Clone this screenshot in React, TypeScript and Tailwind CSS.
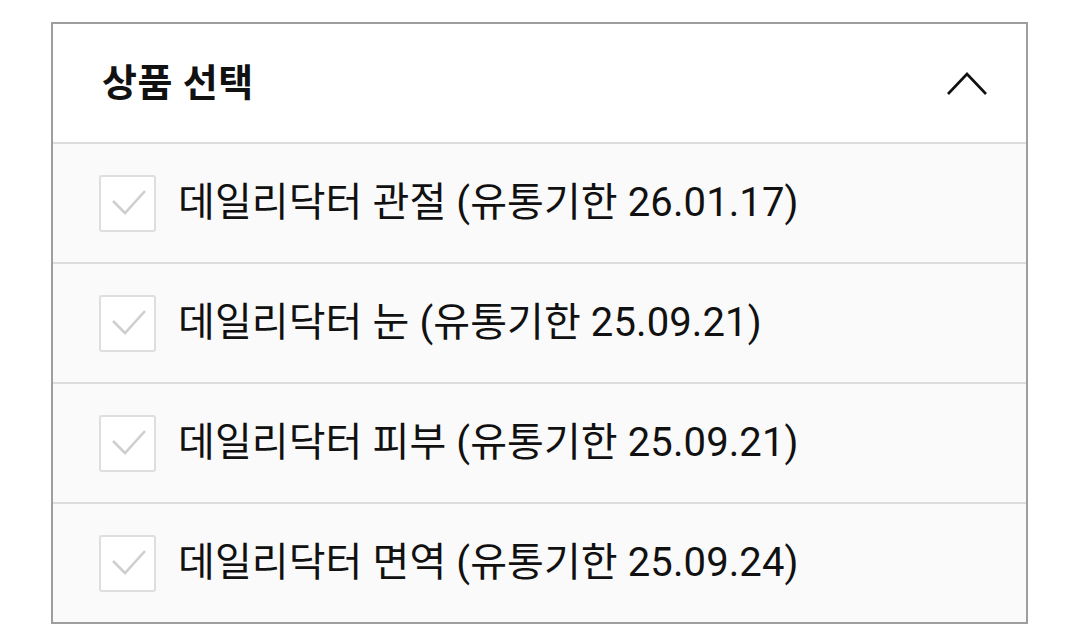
import React from "react";

const items = [
  "데일리닥터 관절 (유통기한 26.01.17)",
  "데일리닥터 눈 (유통기한 25.09.21)",
  "데일리닥터 피부 (유통기한 25.09.21)",
  "데일리닥터 면역 (유통기한 25.09.24)",
];

const font = { fontFamily: 'Roboto, "Noto Sans CJK KR", sans-serif' };

export default function App() {
  return (
    <div className="w-[1080px] h-[633px] bg-white pt-[22px] pl-[51px]" style={font}>
      <div className="w-[977px] border-2 border-[#9e9e9e] bg-white">
        <div className="h-[120px] flex items-center justify-between pl-[49px] pr-[38px] border-b-2 border-[#dcdcdc]">
          <span className="text-[38px] font-bold text-[#111] tracking-[0.5px]">상품 선택</span>
          <svg width="42" height="26" viewBox="0 0 42 26" fill="none">
            <path d="M2 24 L21 4 L40 24" stroke="#111" strokeWidth="2.6" />
          </svg>
        </div>
        {items.map((t, i) => (
          <div
            key={i}
            className={`flex items-center bg-[#fafafa] pl-[46px] ${i < items.length - 1 ? "h-[120px] border-b-2 border-[#dcdcdc]" : "h-[118px]"}`}
          >
            <div className="w-[57px] h-[57px] rounded-[3px] border-2 border-[#dedede] bg-white shrink-0">
              <svg width="53" height="53" viewBox="0 0 53 53" fill="none">
                <path d="M12 24 L24 36 L44 14" stroke="#cfcfcf" strokeWidth="2.6" />
              </svg>
            </div>
            <span className="ml-[22px] text-[40px] text-[#111] leading-none tracking-[0.1px]">{t}</span>
          </div>
        ))}
      </div>
    </div>
  );
}
